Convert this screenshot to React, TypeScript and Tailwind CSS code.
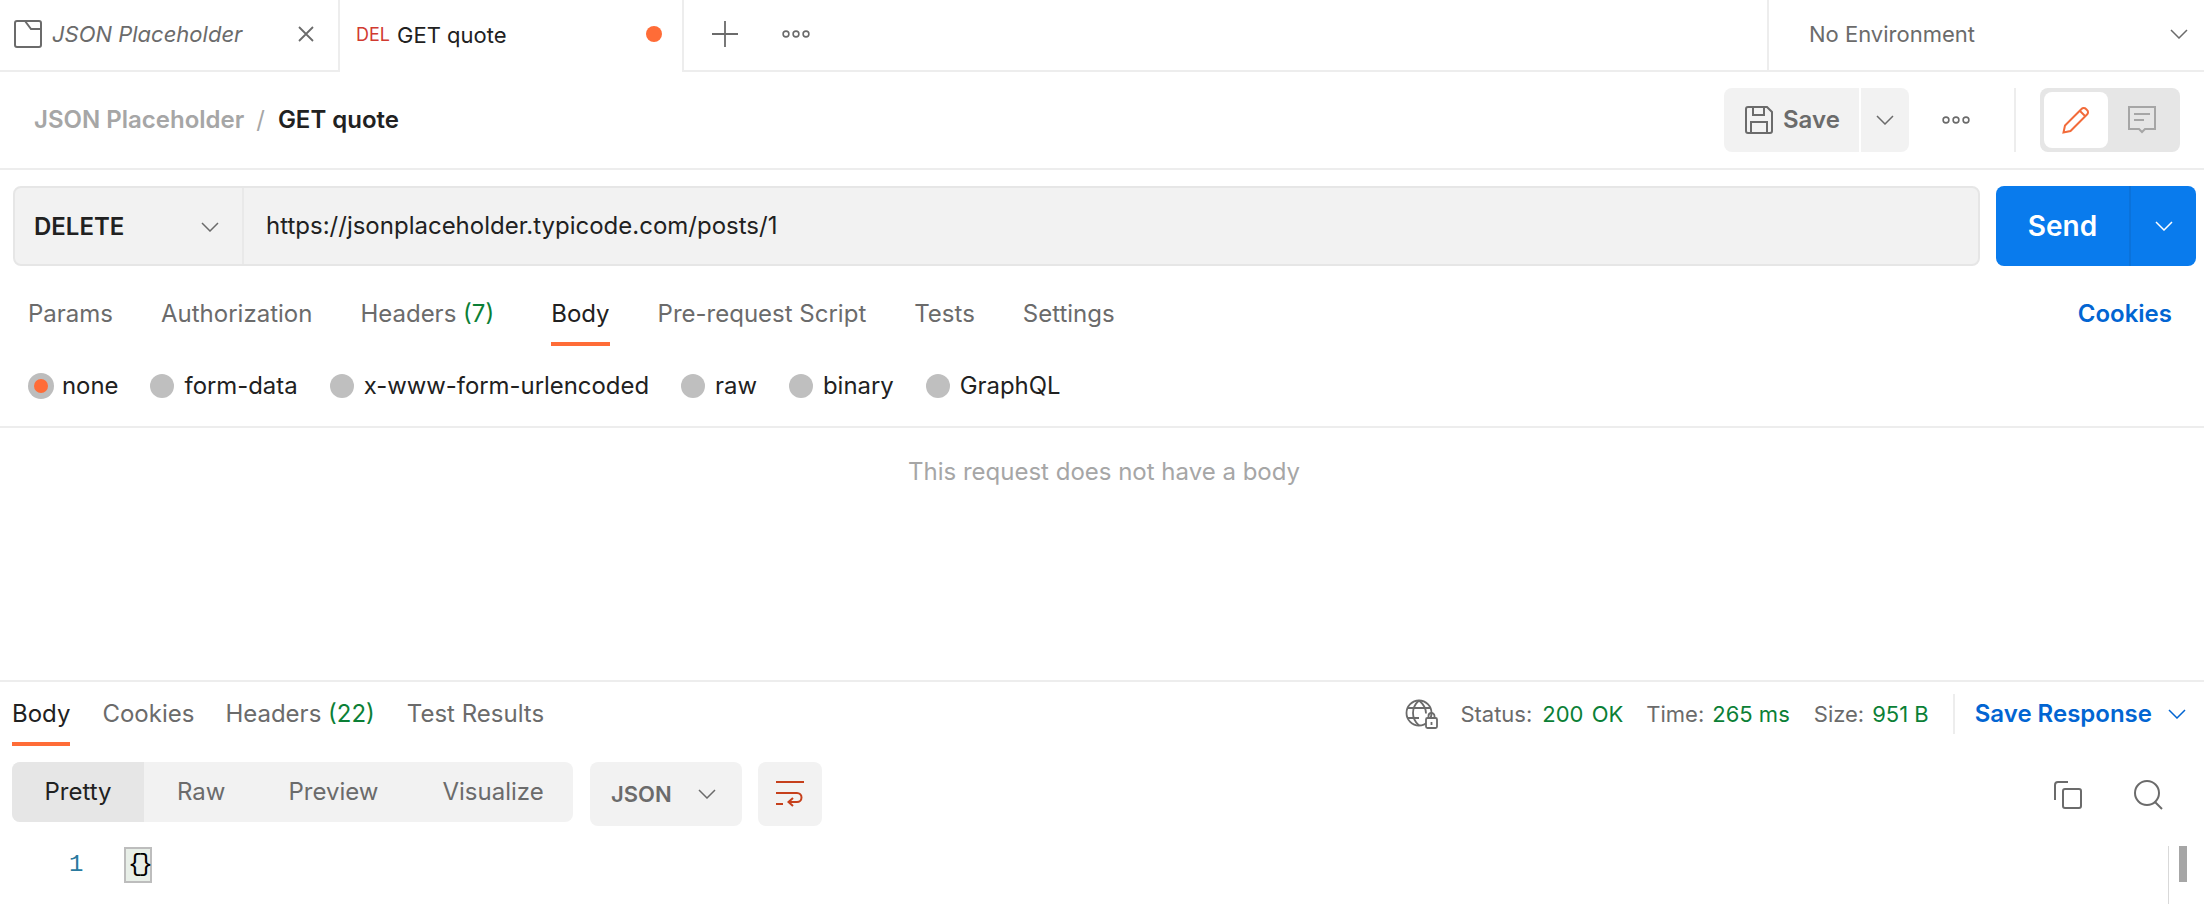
import React from 'react';

const Chevron = ({ className = '' }: { className?: string }) => (
  <svg viewBox="1 1 18 10" fill="none" stroke="currentColor" strokeWidth="1.5" className={className}>
    <path d="M2 2l8 8 8-8" />
  </svg>
);

const Dots = () => (
  <svg viewBox="0 0 28 8" width="28" height="8" fill="none" stroke="#6b6b6b" strokeWidth="1.6">
    <circle cx="4" cy="4" r="2.9" />
    <circle cx="14" cy="4" r="2.9" />
    <circle cx="24" cy="4" r="2.9" />
  </svg>
);

const Radio = ({ label, active }: { label: string; active?: boolean }) => (
  <div className="flex items-center">
    {active ? (
      <span className="flex h-[26px] w-[26px] items-center justify-center rounded-full bg-[#bdbdbd]">
        <span className="h-[14px] w-[14px] rounded-full bg-[#ff6c37]" />
      </span>
    ) : (
      <span className="h-6 w-6 rounded-full bg-[#bfbfbf]" />
    )}
    <span className={active ? 'ml-2 text-[#212121]' : 'ml-[10px] text-[#212121]'}>{label}</span>
  </div>
);

export default function App() {
  return (
    <div className="flex h-[904px] w-[2204px] flex-col overflow-hidden bg-white font-['Inter',sans-serif] text-[24px] leading-8 text-[#6b6b6b]">
      {/* tab strip */}
      <div className="flex h-[72px] border-b-2 border-[#ededed]">
        <div className="flex w-[340px] items-center border-r-2 border-[#ededed] pb-[2px] pl-[14px] text-[22px]">
          <svg viewBox="0 0 28 28" width="28" height="28" fill="none" stroke="#6b6b6b" strokeWidth="2">
            <path d="M3 1h22a2 2 0 0 1 2 2v22a2 2 0 0 1-2 2H3a2 2 0 0 1-2-2V3a2 2 0 0 1 2-2z" />
            <path d="M11 1l6 8h10" />
          </svg>
          <span className="ml-[10px] italic">JSON Placeholder</span>
          <svg viewBox="0 0 16 16" width="16" height="16" fill="none" stroke="#6b6b6b" strokeWidth="1.8" className="ml-[56px]">
            <path d="M1 1l14 14M15 1L1 15" />
          </svg>
        </div>
        <div className="relative -mb-[2px] flex w-[344px] items-center border-r-2 border-[#ededed] bg-white pb-[2px] pl-4">
          <span className="text-[18px] text-[#d13a30]">DEL</span>
          <span className="ml-[7px] text-[22px] text-[#212121]">GET quote</span>
          <span className="absolute right-[20px] top-[26px] h-4 w-4 rounded-full bg-[#ff6c37]" />
        </div>
        <div className="flex flex-1 items-center pb-[3px] pl-[28px]">
          <svg viewBox="0 0 26 26" width="26" height="26" fill="none" stroke="#6b6b6b" strokeWidth="1.8">
            <path d="M13 0v26M0 13h26" />
          </svg>
          <span className="ml-[44px]"><Dots /></span>
        </div>
        <div className="flex w-[437px] items-center border-l-2 border-[#ededed] pb-[3px] pl-10 pr-4">
          <span className="text-[22px]">No Environment</span>
          <Chevron className="ml-auto h-[10px] w-[18px] text-[#6b6b6b]" />
        </div>
      </div>

      {/* breadcrumb + actions */}
      <div className="flex h-[98px] items-center border-b-2 border-[#ededed] pl-[34px] pr-6">
        <span className="font-semibold text-[#a6a6a6]">JSON Placeholder</span>
        <span className="ml-[12px] mr-[13px] text-[#a6a6a6]">/</span>
        <span className="font-semibold text-[#212121]">GET quote</span>
        <div className="ml-auto flex items-center">
          <button className="flex h-16 w-[135px] items-center rounded-l-lg bg-[#f2f2f2] pl-[21px] font-semibold">
            <svg viewBox="0 0 28 28" width="28" height="28" fill="none" stroke="#6b6b6b" strokeWidth="2">
              <path d="M3 1h19l5 5v19a2 2 0 0 1-2 2H3a2 2 0 0 1-2-2V3a2 2 0 0 1 2-2z" />
              <path d="M8 1v8h11V1M6 27V16h16v11" />
            </svg>
            <span className="ml-[10px]">Save</span>
          </button>
          <button className="ml-[2px] flex h-16 w-12 items-center justify-center rounded-r-lg bg-[#f2f2f2]">
            <Chevron className="h-[10px] w-[18px]" />
          </button>
          <span className="ml-[33px]"><Dots /></span>
          <span className="ml-[44px] h-16 w-[2px] bg-[#ededed]" />
          <div className="ml-6 flex h-16 w-[140px] items-center rounded-lg bg-[#e6e6e6] p-1">
            <span className="flex h-14 w-16 items-center justify-center rounded-lg bg-white">
              <svg viewBox="0 0 28 28" width="28" height="28" fill="none" stroke="#f26b3a" strokeWidth="2">
                <path d="M1.5 26.5l1.5-7L19.5 3a3 3 0 0 1 4.5 0l1 1a3 3 0 0 1 0 4.5L8.500 25z" />
                <path d="M18 5l5.500 5.500" />
              </svg>
            </span>
            <span className="flex flex-1 items-center justify-center">
              <svg viewBox="0 0 28 28" width="28" height="28" fill="none" stroke="#a6a6a6" strokeWidth="2">
                <path d="M1 1h26v22H17l-3 3-3-3H1z" />
                <path d="M6 8h16M6 14h10" />
              </svg>
            </span>
          </div>
        </div>
      </div>

      {/* url bar */}
      <div className="flex h-24 items-start pl-[13px] pr-2 pt-4">
        <div className="flex h-20 flex-1 rounded-lg border-2 border-[#e6e6e6] bg-[#f2f2f2]">
          <div className="flex w-[229px] items-center border-r-2 border-[#e9e9e9] pl-[19px] pr-[23px] pt-[1px] font-semibold text-[#212121]">
            DELETE
            <Chevron className="ml-auto h-[10px] w-[18px] text-[#6b6b6b]" />
          </div>
          <div className="flex flex-1 items-center pl-[22px] text-[#212121]">https://jsonplaceholder.typicode.com/posts/1</div>
        </div>
        <div className="ml-4 flex h-20 w-[200px] rounded-lg bg-[#097bed] text-white">
          <div className="flex w-[135px] items-center justify-center border-r-2 border-[#0a72db] text-[28px] font-semibold">Send</div>
          <div className="flex flex-1 items-center justify-center">
            <Chevron className="h-[10px] w-[18px]" />
          </div>
        </div>
      </div>

      {/* request tabs */}
      <div className="flex h-[86px] items-start gap-12 pl-7 pr-[32px] pt-[32px]">
        <span>Params</span>
        <span>Authorization</span>
        <span className="mr-[9px]">Headers <span className="text-[#0b7f36]">(7)</span></span>
        <span className="relative text-[#212121]">
          Body
          <span className="absolute -bottom-[16px] left-0 right-0 h-1 bg-[#ff6c37]" />
        </span>
        <span>Pre-request Script</span>
        <span>Tests</span>
        <span>Settings</span>
        <span className="ml-auto font-semibold text-[#0265d2]">Cookies</span>
      </div>

      {/* body type */}
      <div className="flex h-[76px] items-start gap-[32px] border-b-2 border-[#ededed] pl-7 pt-[18px] text-[23.9px]">
        <Radio label="none" active />
        <Radio label="form-data" />
        <Radio label="x-www-form-urlencoded" />
        <Radio label="raw" />
        <Radio label="binary" />
        <Radio label="GraphQL" />
      </div>

      <div className="h-[252px] pl-[908px] pt-7 text-[#a6a6a6]">This request does not have a body</div>

      {/* response */}
      <div className="flex h-[65px] items-center border-t-2 border-[#ededed] pl-3 pr-[18px]">
        <div className="flex h-full items-start gap-[32px] pt-[16px]">
          <span className="relative text-[#212121]">
            Body
            <span className="absolute -bottom-[16px] left-0 right-0 h-1 bg-[#ff6c37]" />
          </span>
          <span>Cookies</span>
          <span className="-ml-[1px]">Headers <span className="text-[#0b7f36]">(22)</span></span>
          <span>Test Results</span>
        </div>
        <div className="ml-auto flex items-center text-[22px]">
          <svg viewBox="0 0 34 30" width="34" height="30" fill="none" stroke="#6b6b6b" strokeWidth="1.8">
            <circle cx="14" cy="14" r="12.500" />
            <path d="M14 1.500c-8 7-8 18 0 25M14 1.500c5 4 7 9 7 13M2 9h24M2 19h12" />
            <rect x="21" y="19" width="11" height="10" rx="1.500" fill="#fff" />
            <path d="M23.500 19v-2a3 3 0 0 1 6 0v2M26.500 23v3" />
          </svg>
          <span className="ml-[21px]">Status:</span>
          <span className="ml-[10px] text-[#0b7f36] [word-spacing:2px]">200 OK</span>
          <span className="ml-[23px]">Time:</span>
          <span className="ml-2 text-[#0b7f36]">265 ms</span>
          <span className="ml-6">Size:</span>
          <span className="ml-2 text-[#0b7f36]">951 B</span>
          <span className="ml-6 h-10 w-[2px] bg-[#ededed]" />
          <span className="ml-[20px] text-[24px] font-semibold text-[#0265d2]">Save Response</span>
          <Chevron className="ml-4 h-[10px] w-[18px] text-[#0265d2]" />
        </div>
      </div>

      <div className="flex h-[101px] items-start pl-3 pt-[17px]">
        <div className="flex h-[60px] w-[561px] items-center rounded-lg bg-[#f2f2f2]">
          <span className="flex h-full w-[132px] items-center justify-center rounded-l-lg bg-[#e6e6e6] text-[#212121]">Pretty</span>
          <span className="ml-[33px]">Raw</span>
          <span className="ml-[63px]">Preview</span>
          <span className="ml-[64px]">Visualize</span>
        </div>
        <div className="ml-[17px] flex h-16 w-[152px] items-center rounded-lg bg-[#f2f2f2] pl-[21px] pr-[26px] text-[22px] font-semibold">
          JSON
          <Chevron className="ml-auto h-[10px] w-[18px]" />
        </div>
        <div className="ml-4 flex h-16 w-16 items-center justify-center rounded-lg bg-[#f2f2f2]">
          <svg viewBox="0 0 30 28" width="30" height="28" fill="none" stroke="#c6401c" strokeWidth="2">
            <path d="M1 2h28M1 13h21a4 4 0 0 1 0 9h-8M1 24h7M18 18l-4.500 4 4.500 4" />
          </svg>
        </div>
        <div className="ml-auto flex items-center gap-[52px] pr-[40px] pt-[18px]">
          <svg viewBox="0 0 28 28" width="28" height="28" fill="none" stroke="#6b6b6b" strokeWidth="2">
            <rect x="9" y="8" width="18" height="19" rx="2" />
            <path d="M14 1H4a3 3 0 0 0-3 3v15" />
          </svg>
          <svg viewBox="0 0 30 30" width="30" height="30" fill="none" stroke="#6b6b6b" strokeWidth="2">
            <circle cx="13" cy="13" r="12" />
            <path d="M21 22l7 7" />
          </svg>
        </div>
      </div>

      {/* editor */}
      <div className="flex flex-1">
        <span className="ml-[69px] mt-[3px] font-['Liberation_Mono',monospace] text-[24px] text-[#2a7a9e]">1</span>
        <span className="ml-[41px] mt-[1px] flex h-[36px] w-[28px] items-center justify-center self-start border-2 border-[#bdbdbd] bg-[#e8efe8] font-['Liberation_Mono',monospace] text-[24px] tracking-[-4px] text-black">{'{}'}</span>
        <div className="ml-auto mr-[16px] flex w-[20px] justify-end border-l border-[#d9d9d9] pr-[1px]">
          <span className="h-9 w-2 bg-[#a6a6a6]" />
        </div>
      </div>
    </div>
  );
}
